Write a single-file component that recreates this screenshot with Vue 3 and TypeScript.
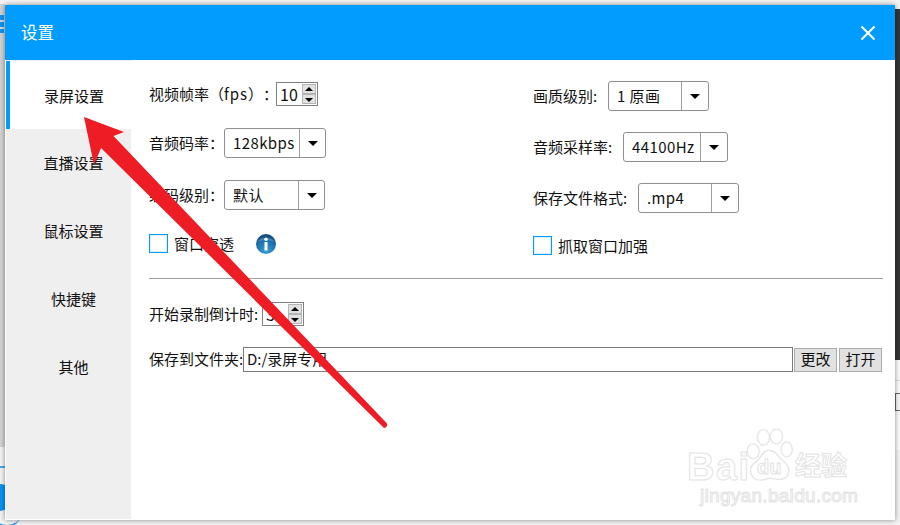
<script setup lang="ts">
interface ComboRow { label: string; value: string; labelWidth: number; comboWidth: number; arrowWidth: number }
const navItems: string[] = ['录屏设置', '直播设置', '鼠标设置', '快捷键', '其他']
const leftCombos: ComboRow[] = [
  { label: '音频码率：', value: '128kbps', labelWidth: 75, comboWidth: 102, arrowWidth: 26 },
  { label: '编码级别：', value: '默认', labelWidth: 75, comboWidth: 101, arrowWidth: 26 },
]
const rightCombos: ComboRow[] = [
  { label: '画质级别:', value: '1 原画', labelWidth: 75, comboWidth: 101, arrowWidth: 27 },
  { label: '音频采样率:', value: '44100Hz', labelWidth: 90, comboWidth: 105, arrowWidth: 27 },
  { label: '保存文件格式:', value: '.mp4', labelWidth: 105, comboWidth: 101, arrowWidth: 27 },
]
</script>

<template>
  <div class="desktop">
    <div class="bg-left"></div>
    <div class="bg-right"></div>
    <div class="bg-right-low"><span class="bg-box"></span></div>
    <div class="bg-left-text"></div>
    <div class="bg-blob"></div>
    <div class="bg-line"></div>
    <div class="bg-curve"></div>

    <section class="win">
      <header class="head">
        <span class="title">设置</span>
        <svg class="close" width="16" height="16" viewBox="0 0 16 16">
          <path d="M1.500 1.500 14.500 14.500M14.500 1.500 1.500 14.500" stroke="#fff" stroke-width="2" fill="none" />
        </svg>
      </header>
      <div class="body">
        <nav class="nav">
          <div v-for="(item, i) in navItems" :key="item" class="nav-item" :class="{ active: i === 0 }">{{ item }}</div>
        </nav>
        <main class="content">
          <div class="form">
            <div class="col col-left">
              <div class="row">
                <span class="label label-fps">视频帧率（<span class="fps">fps</span>）：</span>
                <div class="spin">
                  <span class="spin-val">10</span>
                  <span class="spin-btns"><i class="up"></i><i class="down"></i></span>
                </div>
              </div>
              <div v-for="c in leftCombos" :key="c.label" class="row">
                <span class="label" :style="{ width: c.labelWidth + 'px' }">{{ c.label }}</span>
                <div class="combo" :style="{ width: c.comboWidth + 'px' }">
                  <span class="combo-val">{{ c.value }}</span>
                  <span class="combo-arrow" :style="{ width: c.arrowWidth + 'px' }"><i></i></span>
                </div>
              </div>
              <div class="row check-row">
                <span class="check"></span>
                <span class="check-text">窗口穿透</span>
                <svg class="info" width="22" height="22" viewBox="0 0 22 22">
                  <defs>
                    <radialGradient id="ig" cx="50%" cy="85%" r="75%">
                      <stop offset="0" stop-color="#3a9ed8" />
                      <stop offset="0.7" stop-color="#1c6fab" />
                      <stop offset="1" stop-color="#154f80" />
                    </radialGradient>
                  </defs>
                  <circle cx="11" cy="11" r="10" fill="url(#ig)" />
                  <path d="M2.500 9C4 3.500 18 3.500 19.500 9 15 6.500 7 6.500 2.500 9Z" fill="#7fbce6" opacity=".4" />
                  <circle cx="11" cy="6.300" r="1.700" fill="#fff" />
                  <rect x="9.500" y="9" width="3" height="8.500" fill="#fff" />
                </svg>
              </div>
            </div>
            <div class="col col-right">
              <div v-for="c in rightCombos" :key="c.label" class="row">
                <span class="label" :style="{ width: c.labelWidth + 'px' }">{{ c.label }}</span>
                <div class="combo" :style="{ width: c.comboWidth + 'px' }">
                  <span class="combo-val">{{ c.value }}</span>
                  <span class="combo-arrow" :style="{ width: c.arrowWidth + 'px' }"><i></i></span>
                </div>
              </div>
              <div class="row check-row">
                <span class="check"></span>
                <span class="check-text">抓取窗口加强</span>
              </div>
            </div>
          </div>
          <div class="sep"></div>
          <div class="row count-row">
            <span class="label label-count">开始录制倒计时:</span>
            <div class="spin">
              <span class="spin-val">3</span>
              <span class="spin-btns"><i class="up"></i><i class="down"></i></span>
            </div>
          </div>
          <div class="row path-row">
            <span class="label label-path">保存到文件夹:</span>
            <div class="path-input">D:/录屏专用</div>
            <button class="btn" type="button">更改</button>
            <button class="btn btn-open" type="button">打开</button>
          </div>
        </main>
      </div>
    </section>

    <div class="mark">
      <svg class="paw" width="50" height="54" viewBox="0 0 52 58" fill="none" stroke="#e6e6e6" stroke-width="1.500">
        <ellipse cx="9" cy="25" rx="6.500" ry="8" />
        <ellipse cx="20" cy="10" rx="6.500" ry="8.500" />
        <ellipse cx="34" cy="9" rx="6.500" ry="8" />
        <ellipse cx="45" cy="23" rx="6" ry="8" />
        <path d="M26 24C18 24 18 33 10 38 3 44 6 56 17 56 22 56 23 54 27 54 32 54 34 56 39 55 48 54 50 43 43 37 36 32 34 24 26 24Z" />
      </svg>
      <span class="mark-bai">Bai</span>
      <span class="mark-du">du</span>
      <span class="mark-cn">经验</span>
      <span class="mark-url">jingyan.baidu.com</span>
    </div>

    <svg class="arrow" width="900" height="525" viewBox="0 0 900 525">
      <path d="M84 117 124 132 113.500 136 387 423.500Q388 427 384 428L101 148 94 165Z" fill="#ee1c25" />
    </svg>
  </div>
</template>

<style scoped>
.desktop {
  position: relative;
  width: 900px;
  height: 525px;
  overflow: hidden;
  background: #f3f3f3;
  font-family: "Noto Sans CJK SC", "Noto Sans", sans-serif;
  color: #111;
  font-size: 15px;
  text-spacing-trim: space-all;
}
.bg-left {
  position: absolute;
  left: 0;
  top: 4px;
  width: 5px;
  height: 443px;
  background: #d2d2d2;
}
.bg-right {
  position: absolute;
  right: 0;
  top: 9px;
  width: 5px;
  height: 351px;
  background: #333;
}
.bg-right-low {
  position: absolute;
  right: 0;
  top: 360px;
  width: 5px;
  height: 90px;
  background: linear-gradient(180deg, #fafafa 0 20px, #ddd 20px 21px, #fafafa 21px);
}
.bg-box {
  position: absolute;
  top: 33px;
  left: 0;
  width: 5px;
  height: 18px;
  background: #f6f6f6;
  border: 1px solid #666;
  border-right: 0;
  box-sizing: border-box;
}
.bg-left-text {
  position: absolute;
  left: 0;
  top: 15px;
  width: 4px;
  height: 18px;
  background: repeating-linear-gradient(180deg, #1193f0 0 5px, #d8d8d8 5px 7px);
}
.bg-blob {
  position: absolute;
  left: -16px;
  top: 484px;
  width: 30px;
  height: 27px;
  border-radius: 50%;
  background: #0a93f3;
}
.bg-line {
  position: absolute;
  left: 0;
  top: 466px;
  width: 5px;
  height: 2px;
  background: #3ea9ee;
}
.bg-curve {
  position: absolute;
  left: -6px;
  top: 505px;
  width: 26px;
  height: 20px;
  border-radius: 50%;
  border-bottom: 2px solid #1c9cf2;
}
.win {
  position: absolute;
  left: 5px;
  top: 5px;
  width: 890px;
  height: 515px;
  display: flex;
  flex-direction: column;
  background: #fff;
  box-shadow: 0 0 5px rgba(0, 0, 0, 0.45);
}
.head {
  flex: none;
  height: 55px;
  box-sizing: border-box;
  display: flex;
  align-items: center;
  justify-content: space-between;
  padding: 0 19px 0 17px;
  background: #009cff;
  color: #fff;
}
.title { font-size: 16.500px; padding-bottom: 2px; margin-left: -1px; }
.close { display: block; }
.body {
  flex: 1;
  display: flex;
  min-height: 0;
  padding: 0 0 1px 1px;
}
.nav {
  flex: none;
  width: 125px;
  background: #efefef;
  padding-top: 1px;
}
.nav-item {
  height: 68px;
  display: flex;
  align-items: center;
  justify-content: center;
  padding-left: 10px;
  padding-bottom: 2px;
  box-sizing: border-box;
  color: #111;
}
.nav-item.active {
  background: #fff;
  border-left: 4px solid #009cff;
  padding-left: 7px;
  padding-bottom: 0;
}
.content {
  flex: 1;
  padding: 21px 12px 0 18px;
  min-width: 0;
}
.form { display: flex; }
.col { display: flex; flex-direction: column; }
.col-left { width: 384px; padding-top: 1px; gap: 22px; }
.col-right { gap: 21px; }
.row { display: flex; align-items: center; }
.label { flex: none; white-space: nowrap; padding-bottom: 2px; box-sizing: content-box; }
.fps { letter-spacing: 0.900px; }
.label-fps { width: 127px; }
.label-count { width: 113px; }
.label-path { width: 94px; }
.spin {
  width: 42px;
  height: 24px;
  box-sizing: border-box;
  border: 1px solid #808080;
  display: flex;
  align-items: center;
  background: #fff;
}
.spin-val { flex: 1; padding-left: 3px; font-size: 16px; line-height: 1; }
.spin-btns {
  flex: none;
  width: 14px;
  height: 20px;
  margin-right: 1px;
  display: flex;
  flex-direction: column;
}
.spin-btns i {
  flex: 1;
  position: relative;
  background: #e1e1e1;
  border: 1px solid #b4b4b4;
  box-sizing: border-box;
}
.spin-btns i::after {
  content: "";
  position: absolute;
  left: 2px;
  border-left: 4px solid transparent;
  border-right: 4px solid transparent;
}
.spin-btns .up::after { top: 2px; border-bottom: 4px solid #000; }
.spin-btns .down::after { top: 3px; border-top: 4px solid #000; }
.combo {
  height: 30px;
  box-sizing: border-box;
  border: 1px solid #909090;
  border-radius: 3px;
  display: flex;
  align-items: stretch;
  background: #fff;
}
.combo-val {
  flex: 1;
  padding: 0 0 2px 8px;
  display: flex;
  align-items: center;
  font-size: 15px;
  letter-spacing: 0.400px;
  white-space: nowrap;
  overflow: hidden;
}
.combo-arrow {
  flex: none;
  box-sizing: border-box;
  border-left: 1px solid #a0a0a0;
  display: flex;
  align-items: center;
  justify-content: center;
}
.combo-arrow i {
  display: block;
  border-left: 5px solid transparent;
  border-right: 5px solid transparent;
  border-top: 5px solid #000;
}
.check-row { height: 19px; margin-top: 2px; }
.check {
  flex: none;
  width: 19px;
  height: 19px;
  box-sizing: border-box;
  border: 1px solid #009cff;
  box-shadow: inset 0 0 0 1px rgba(0, 156, 255, 0.15);
  background: #fff;
}
.check-text { margin-left: 6px; white-space: nowrap; padding-bottom: 1px; }
.info { margin-left: 21px; flex: none; }
.sep {
  height: 1px;
  margin-top: 23px;
  background: #a0a0a0;
}
.count-row { margin-top: 23px; }
.path-row { margin-top: 21px; }
.path-input {
  flex: none;
  width: 550px;
  height: 25px;
  box-sizing: border-box;
  border: 1px solid #7a7a7a;
  padding: 0 0 2px 3px;
  display: flex;
  align-items: center;
  line-height: 1;
}
.btn {
  flex: none;
  width: 43px;
  height: 24px;
  margin: 0 0 0 1px;
  padding: 0 0 2px;
  box-sizing: border-box;
  background: #e1e1e1;
  border: 1px solid #adadad;
  font: inherit;
  color: #111;
  display: flex;
  align-items: center;
  justify-content: center;
}
.btn-open { margin-left: 2px; }
.mark {
  position: absolute;
  left: 680px;
  top: 420px;
  width: 180px;
  height: 90px;
  font-family: "Liberation Sans", sans-serif;
}
.paw { position: absolute; left: 64px; top: 8px; }
.mark span {
  position: absolute;
  color: rgba(255, 255, 255, 0.6);
  -webkit-text-stroke: 1px #e3e3e3;
  white-space: nowrap;
}
.mark-bai { left: 7px; top: 28px; font-size: 38px; font-weight: 700; line-height: 1; letter-spacing: 1.500px; }
.mark-du { left: 77px; top: 37px; font-size: 20px; font-weight: 700; line-height: 1; }
.mark-cn { left: 115px; top: 31px; font-size: 26px; line-height: 1; font-family: "Noto Sans CJK SC", sans-serif; font-weight: 700; }
.mark-url { left: 20px; top: 66px; font-size: 19px; line-height: 1; letter-spacing: 0.300px; }
.arrow {
  position: absolute;
  left: 0;
  top: 0;
  pointer-events: none;
}
</style>
